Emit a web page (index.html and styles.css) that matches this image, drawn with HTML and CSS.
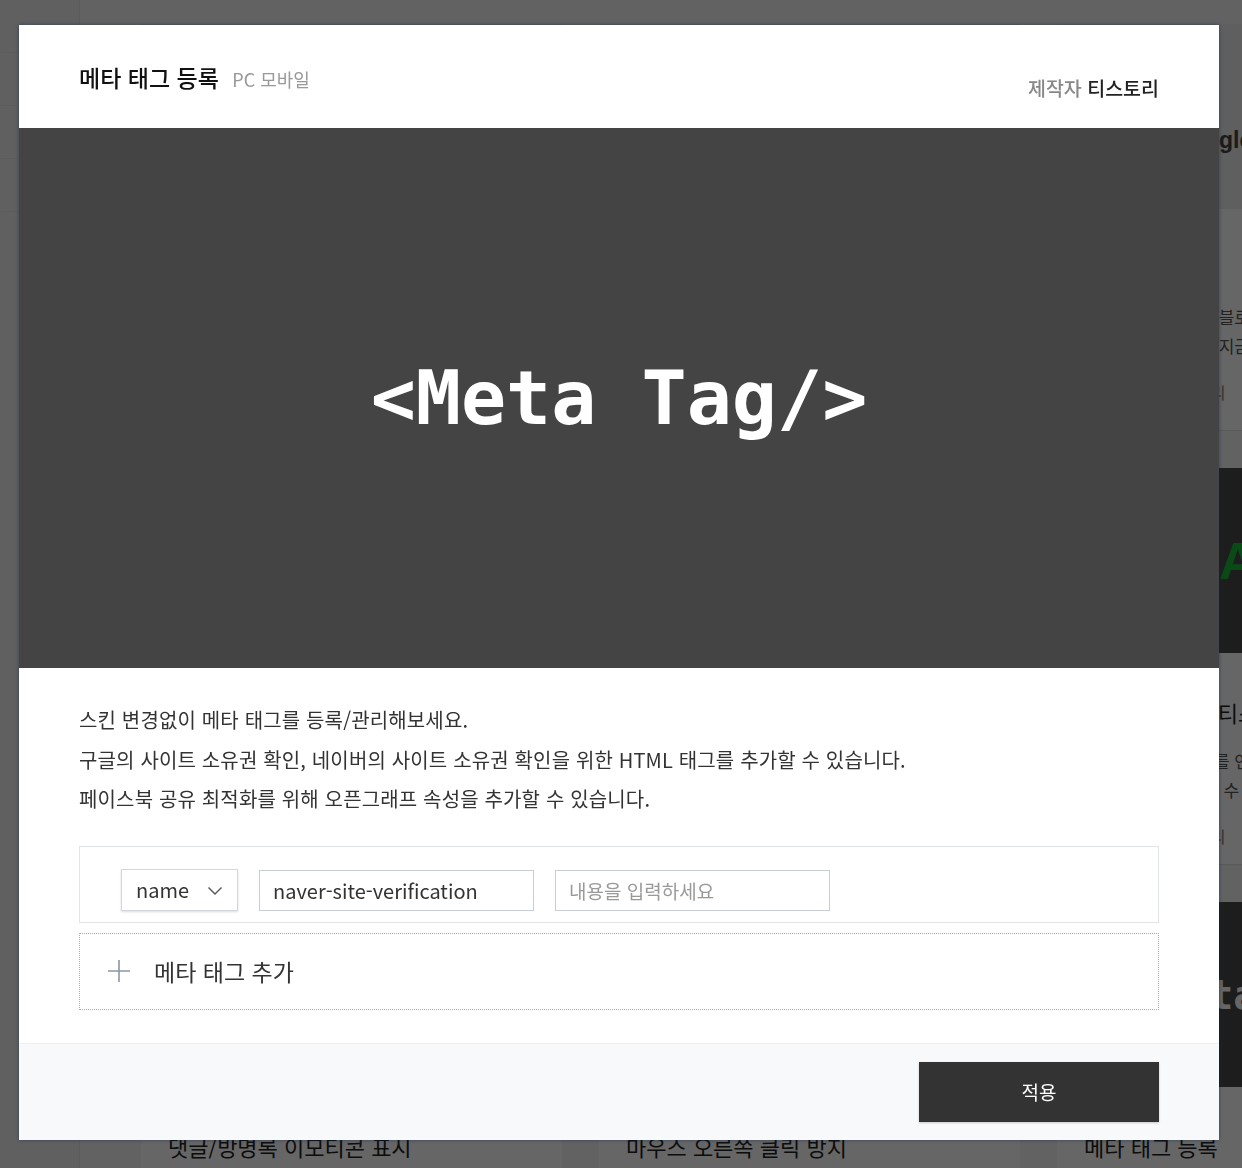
FILE: index.html
```html
<!DOCTYPE html>
<html lang="ko">
<head>
    <meta charset="UTF-8">
    <meta name="viewport" content="width=device-width, initial-scale=1.0">
    <title>메타 태그 등록</title>
    <link rel="stylesheet" href="styles.css">
</head>
<body>
    <div class="page">
        <aside class="side">
            <div class="side-item"></div>
            <div class="side-item"></div>
            <div class="side-item"></div>
            <div class="side-item"></div>
        </aside>
        <main class="plugins">
            <div class="card tall"><div class="thumb light"></div></div>
            <div class="card tall"><div class="thumb light"></div></div>
            <div class="card tall">
                <div class="thumb light"><span class="logo-google">Google</span></div>
                <h3>애널리틱스</h3>
                <p>구글 애널리틱스로 블로그 방문자를 분석하세요.<br>간단한 설정만으로 지금 바로 시작할 수 있습니다.</p>
                <span class="manage">블로그 플러그인 관리</span>
            </div>
            <div class="card"><div class="thumb"></div></div>
            <div class="card"><div class="thumb"></div></div>
            <div class="card">
                <div class="thumb"><span class="logo-ads">ADS</span></div>
                <h3>구글 애드센스 티스토리</h3>
                <p>블로그에 애드센스를 연동해 광고를 게재합니다.<br>광고 위치를 선택할 수 있습니다.</p>
                <span class="manage">블로그 플러그인 관리</span>
            </div>
            <div class="card">
                <div class="thumb"></div>
                <h3>댓글/방명록 이모티콘 표시</h3>
            </div>
            <div class="card">
                <div class="thumb"></div>
                <h3>마우스 오른쪽 클릭 방지</h3>
            </div>
            <div class="card">
                <div class="thumb"><span class="logo-meta">&lt;Meta Tag/&gt;</span></div>
                <h3>메타 태그 등록</h3>
            </div>
        </main>
    </div>

    <div class="dim">
        <div class="modal">
            <div class="modal-head">
                <h2 class="modal-title">메타 태그 등록 <span class="device">PC 모바일</span></h2>
                <div class="maker"><span class="maker-label">제작자</span> 티스토리</div>
            </div>

            <div class="banner">&lt;Meta Tag/&gt;</div>

            <div class="modal-body">
                <p class="desc">
                    스킨 변경없이 메타 태그를 등록/관리해보세요.<br>
                    구글의 사이트 소유권 확인, 네이버의 사이트 소유권 확인을 위한 HTML 태그를 추가할 수 있습니다.<br>
                    페이스북 공유 최적화를 위해 오픈그래프 속성을 추가할 수 있습니다.
                </p>

                <div class="tag-row">
                    <div class="select">
                        <span>name</span>
                        <svg width="16" height="10" viewBox="0 0 16 10"><polyline points="1.5,1.5 8,8 14.5,1.5" fill="none" stroke="#555" stroke-width="1.4"/></svg>
                    </div>
                    <input class="field" type="text" value="naver-site-verification">
                    <input class="field" type="text" placeholder="내용을 입력하세요">
                </div>

                <div class="add-row">
                    <svg class="plus" width="22" height="22" viewBox="0 0 22 22"><path d="M11 0v22M0 11h22" stroke="#8d96a3" stroke-width="1.6"/></svg>
                    <span>메타 태그 추가</span>
                </div>
            </div>

            <div class="modal-foot">
                <button class="apply">적용</button>
            </div>
        </div>
    </div>
</body>
</html>
```

FILE: styles.css
```css
body {
    margin: 0;
    font-family: "Noto Sans CJK KR", "Noto Sans", sans-serif;
    background-color: #f4f5f7;
    color: #222;
    overflow: hidden;
}
.page {
    display: flex;
    height: 1168px;
    overflow: hidden;
}
.side {
    width: 79px;
    flex-shrink: 0;
    background-color: #f0f0f0;
    border-right: 1px solid #e4e4e4;
}
.side-item {
    height: 52px;
    border-bottom: 1px solid #e6e6e6;
}
.plugins {
    display: grid;
    grid-template-columns: repeat(3, 421px);
    column-gap: 37px;
    row-gap: 37px;
    padding: 24px 0 0 61px;
    align-content: start;
}
.card {
    height: 396px;
    background-color: #fff;
    border-bottom: 1px solid #e2e2e2;
    overflow: hidden;
}
.card.tall {
    height: 406px;
}
.thumb {
    height: 185px;
    background-color: #4a4a4a;
    display: flex;
    align-items: center;
}
.thumb.light {
    background-color: #eeeeee;
}
.logo-google {
    padding-left: 116px;
    font-family: "Liberation Sans", sans-serif;
    font-weight: bold;
    font-size: 23px;
    color: #444;
    margin-top: 48px;
}
.logo-ads {
    padding-left: 162px;
    font-family: "Liberation Sans", sans-serif;
    font-weight: bold;
    font-size: 52px;
    color: #18b93a;
}
.logo-meta {
    padding-left: 80px;
    font-family: "DejaVu Sans Mono", monospace;
    font-weight: bold;
    font-size: 40px;
    color: #fff;
}
.card h3 {
    margin: 44px 0 0 27px;
    font-size: 22px;
    font-weight: 400;
    line-height: 30px;
}
.card p {
    margin: 19px 0 0 27px;
    font-size: 17px;
    line-height: 29px;
    color: #555;
    white-space: nowrap;
}
.manage {
    display: block;
    margin: 20px 0 0 27px;
    font-size: 16px;
    color: #777;
}
.dim {
    position: fixed;
    inset: 0;
    background-color: rgba(0, 0, 0, 0.6);
    padding: 25px 0 0 19px;
}
.modal {
    width: 1200px;
    background-color: #fff;
    box-shadow: 0 0 4px rgba(20, 40, 70, 0.6);
}
.modal-head {
    height: 103px;
    display: flex;
    justify-content: space-between;
    padding: 0 60px;
    box-sizing: border-box;
}
.modal-title {
    margin: 36px 0 0;
    font-size: 23px;
    font-weight: 500;
    line-height: 33px;
    color: #111;
}
.device {
    margin-left: 7px;
    font-size: 18px;
    font-weight: 400;
    color: #999;
}
.maker {
    margin-top: 49px;
    font-size: 19.5px;
    font-weight: 500;
    line-height: 27px;
    color: #222;
}
.maker-label {
    color: #888;
}
.banner {
    height: 540px;
    background-color: #444;
    display: flex;
    align-items: center;
    justify-content: center;
    font-family: "DejaVu Sans Mono", monospace;
    font-weight: bold;
    font-size: 75px;
    color: #fff;
}
.modal-body {
    padding: 32px 60px 33px;
}
.desc {
    margin: 0;
    font-size: 20px;
    letter-spacing: 0.15px;
    line-height: 39.5px;
    color: #333;
}
.tag-row {
    margin-top: 27px;
    border: 1px solid #e1e5ea;
    display: flex;
    align-items: flex-start;
    gap: 21px;
    padding: 22px 0 0 41px;
    height: 53px;
}
.select {
    width: 117px;
    height: 42px;
    box-sizing: border-box;
    border: 1px solid #d3d8de;
    box-shadow: 0 1px 2px rgba(0, 0, 0, 0.15);
    display: flex;
    align-items: center;
    justify-content: space-between;
    padding: 0 14px 0 14px;
    font-size: 20px;
    color: #333;
}
.select svg {
    margin-top: 2px;
}
.field {
    width: 275px;
    height: 41px;
    margin-top: 1px;
    box-sizing: border-box;
    border: 1px solid #c8ced6;
    padding: 0 13px;
    font-family: inherit;
    font-size: 20px;
    color: #333;
    outline: none;
}
.field::placeholder {
    color: #999;
    font-size: 19px;
}
.add-row {
    margin-top: 10px;
    height: 75px;
    border: 1px dotted #a9acb8;
    display: flex;
    align-items: center;
    padding-left: 28px;
    gap: 24px;
    font-size: 23px;
    color: #333;
}
.modal-foot {
    height: 97px;
    border-top: 1px solid #eef0f3;
    background-color: #f8f9fb;
    display: flex;
    justify-content: flex-end;
    align-items: flex-start;
    padding: 18px 60px 0;
    box-sizing: border-box;
}
.apply {
    width: 240px;
    height: 60px;
    border: none;
    background-color: #333;
    color: #fff;
    font-family: inherit;
    font-size: 19px;
    box-shadow: 0 1px 2px rgba(0, 0, 0, 0.2);
}
```
